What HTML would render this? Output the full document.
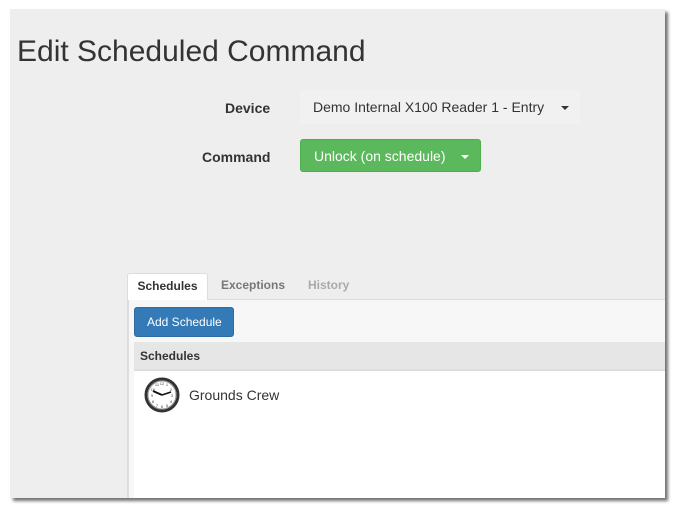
<!DOCTYPE html>
<html><head><meta charset="utf-8"><style>
*{box-sizing:border-box;margin:0;padding:0}
body{width:675px;height:509px;background:#fff;font-family:"Liberation Sans",Arial,sans-serif;position:relative;overflow:hidden}
.panel{position:absolute;left:10px;top:9px;width:655px;height:489px;background:#eeeeee;box-shadow:3px 3px 3px rgba(0,0,0,.55);overflow:hidden}
.title{position:absolute;left:7px;top:26px;font-size:30px;color:#333}
.lbl{position:absolute;font-size:14px;font-weight:bold;color:#333}
.dev{position:absolute;left:290px;top:81px;width:280px;height:34px;background:#f1f1f1;font-size:14px;color:#333;padding:9px 0 0 13px}
.caret{display:inline-block;width:0;height:0;border-left:4px solid transparent;border-right:4px solid transparent;border-top:4px solid #333;vertical-align:middle}
.cmd{position:absolute;left:290px;top:130px;width:181px;height:33px;background:#5cb85c;border:1px solid #4cae4c;border-radius:3px;color:#fff;font-size:14px;padding:8px 0 0 13px}
.cmd .caret{border-top-color:#fff;margin-left:12px}
.tabline{position:absolute;left:117px;top:290px;width:540px;height:1px;background:#ddd}
.tab{position:absolute;top:264px;font-size:12px;font-weight:bold;padding:5px 0 0 0}
.tab.act{left:117px;width:81px;height:28px;background:#fff;border:1px solid #ddd;border-bottom:none;border-radius:3px 3px 0 0;color:#333;text-align:center}
.content{position:absolute;left:117px;top:291px;width:540px;height:200px;background:#f7f7f7;border-left:2px solid #ddd}
.btn{position:absolute;left:5px;top:7px;width:100px;height:30px;background:#337ab7;border:1px solid #2e6da4;border-radius:3px;color:#fff;font-size:12px;padding:7px 0 0 12px}
.hdr{position:absolute;left:5px;top:42px;width:540px;height:29px;background:#e6e6e6;border-bottom:2px solid #ddd;font-size:12px;font-weight:bold;color:#333;padding:7px 0 0 6px}
.body{position:absolute;left:5px;top:71px;width:540px;height:140px;background:#fff}
.row{position:absolute;left:55px;top:16px;font-size:14px;color:#333}
</style></head><body>
<div class="panel">
<div class="title">Edit Scheduled Command</div>
<div class="lbl" style="left:215px;top:91px">Device</div>
<div class="dev">Demo Internal X100 Reader 1 - Entry <span class="caret" style="margin-left:13px"></span></div>
<div class="lbl" style="left:192px;top:140px">Command</div>
<div class="cmd">Unlock (on schedule) <span class="caret"></span></div>
<div class="tabline"></div>
<div class="tab act">Schedules</div>
<div class="tab" style="left:211px;color:#777">Exceptions</div>
<div class="tab" style="left:298px;color:#aaa">History</div>
<div class="content">
<div class="btn">Add Schedule</div>
<div class="hdr">Schedules</div>
<div class="body">
<svg style="position:absolute;left:10px;top:6px" width="36" height="36" viewBox="0 0 36 36">
<circle cx="18" cy="18" r="16" fill="#fff" stroke="#333" stroke-width="3"/>
<circle cx="18" cy="18" r="14" fill="none" stroke="#999" stroke-width="1"/>
<g fill="#444" font-size="4" font-family="Liberation Sans" text-anchor="middle">
<text x="18" y="8">12</text><text x="28" y="20">3</text><text x="18" y="31">6</text><text x="8" y="20">9</text>
<text x="23" y="9">1</text><text x="27" y="14">2</text><text x="27" y="26">4</text><text x="23" y="30">5</text>
<text x="13" y="30">7</text><text x="9" y="26">8</text><text x="9" y="14">10</text><text x="13" y="9">11</text></g>
<line x1="18" y1="18" x2="9" y2="14" stroke="#111" stroke-width="2"/>
<line x1="18" y1="18" x2="27" y2="15" stroke="#111" stroke-width="1.5"/>
</svg>
<div class="row">Grounds Crew</div>
</div>
</div>
</div>
</body></html>
